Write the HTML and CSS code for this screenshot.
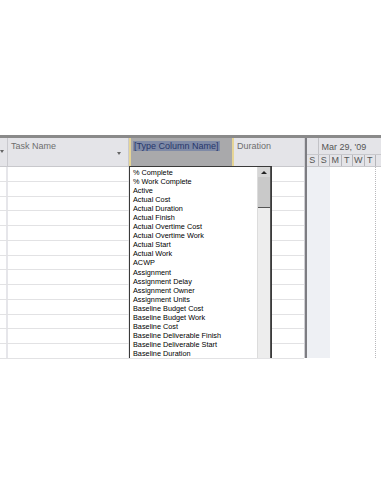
FILE: index.html
```html
<!DOCTYPE html>
<html lang="en">
<head>
    <meta charset="UTF-8">
    <title>Gantt Chart - Insert Column</title>
    <link rel="stylesheet" href="styles.css">
</head>
<body>

<div class="view">
    <div class="table-pane">
        <div class="hdr">
            <div class="cell c0"><span class="arrow"></span></div>
            <div class="cell c1">Task Name<span class="arrow"></span></div>
            <div class="cell c2 editing"><span class="sel">[Type Column Name]</span></div>
            <div class="cell c3">Duration</div>
        </div>
        <div class="rows">
            <div class="row"><div class="cell c0"></div><div class="cell c1"></div><div class="cell c2"></div><div class="cell c3"></div></div>
            <div class="row"><div class="cell c0"></div><div class="cell c1"></div><div class="cell c2"></div><div class="cell c3"></div></div>
            <div class="row"><div class="cell c0"></div><div class="cell c1"></div><div class="cell c2"></div><div class="cell c3"></div></div>
            <div class="row"><div class="cell c0"></div><div class="cell c1"></div><div class="cell c2"></div><div class="cell c3"></div></div>
            <div class="row"><div class="cell c0"></div><div class="cell c1"></div><div class="cell c2"></div><div class="cell c3"></div></div>
            <div class="row"><div class="cell c0"></div><div class="cell c1"></div><div class="cell c2"></div><div class="cell c3"></div></div>
            <div class="row"><div class="cell c0"></div><div class="cell c1"></div><div class="cell c2"></div><div class="cell c3"></div></div>
            <div class="row"><div class="cell c0"></div><div class="cell c1"></div><div class="cell c2"></div><div class="cell c3"></div></div>
            <div class="row"><div class="cell c0"></div><div class="cell c1"></div><div class="cell c2"></div><div class="cell c3"></div></div>
            <div class="row"><div class="cell c0"></div><div class="cell c1"></div><div class="cell c2"></div><div class="cell c3"></div></div>
            <div class="row"><div class="cell c0"></div><div class="cell c1"></div><div class="cell c2"></div><div class="cell c3"></div></div>
            <div class="row"><div class="cell c0"></div><div class="cell c1"></div><div class="cell c2"></div><div class="cell c3"></div></div>
            <div class="row"><div class="cell c0"></div><div class="cell c1"></div><div class="cell c2"></div><div class="cell c3"></div></div>
        </div>

        <!-- field picker dropped down from the new column header -->
        <div class="picker">
            <ul class="fields">
                <li>% Complete</li>
                <li>% Work Complete</li>
                <li>Active</li>
                <li>Actual Cost</li>
                <li>Actual Duration</li>
                <li>Actual Finish</li>
                <li>Actual Overtime Cost</li>
                <li>Actual Overtime Work</li>
                <li>Actual Start</li>
                <li>Actual Work</li>
                <li>ACWP</li>
                <li>Assignment</li>
                <li>Assignment Delay</li>
                <li>Assignment Owner</li>
                <li>Assignment Units</li>
                <li>Baseline Budget Cost</li>
                <li>Baseline Budget Work</li>
                <li>Baseline Cost</li>
                <li>Baseline Deliverable Finish</li>
                <li>Baseline Deliverable Start</li>
                <li>Baseline Duration</li>
            </ul>
            <div class="scrollbar">
                <div class="btn-up"><span class="tri"></span></div>
                <div class="thumb"></div>
            </div>
        </div>
    </div>

    <div class="splitter"></div>

    <div class="gantt-pane">
        <div class="timescale">
            <div class="weeks">
                <div class="wk wk-prev"></div>
                <div class="wk">Mar 29, '09</div>
            </div>
            <div class="days">
                <div class="day">S</div>
                <div class="day">S</div>
                <div class="day">M</div>
                <div class="day">T</div>
                <div class="day">W</div>
                <div class="day">T</div>
            </div>
        </div>
        <div class="chart">
            <div class="col shade"></div>
            <div class="col shade"></div>
            <div class="col"></div>
            <div class="col"></div>
            <div class="col"></div>
            <div class="col dotted"></div>
        </div>
    </div>
</div>

</body>
</html>
```

FILE: styles.css
```css
body {
    margin: 0;
    background-color: #fff;
    font-family: "Liberation Sans", Arial, sans-serif;
    width: 381px;
    height: 492px;
    overflow: hidden;
}
.view {
    margin-top: 135px;
    border-top: 3px solid #8a8a8a;
    display: flex;
    height: 220px;
}
.table-pane {
    position: relative;
    width: 304px;
    flex: none;
    border-right: 1px solid #cfcfd4;
}
.hdr, .row {
    display: flex;
}
.hdr {
    height: 28px;
    background-color: #e4e4e8;
    border-bottom: 1px solid #c8c8cc;
    font-size: 9px;
    color: #6e6e6e;
}
.hdr .cell {
    position: relative;
    padding: 3px 3px 0;
    border-right: 1px solid #c9c9ce;
}
.cell {
    box-sizing: border-box;
    height: 100%;
}
.c0 { width: 8px; padding: 0 !important; }
.c1 { width: 121px; }
.c2 { width: 105px; }
.c3 { width: 70px; border-right: none !important; }
.hdr .editing {
    background-color: #a9a9ab;
    border-left: 2px solid #e6d596;
    border-right: 2px solid #e6d596;
    padding-left: 2px;
}
.sel {
    background-color: #7f8aa6;
    color: #27366a;
    padding: 0 1px;
}
.arrow {
    position: absolute;
    right: 7px;
    top: 14px;
    width: 0;
    height: 0;
    border-left: 2.5px solid transparent;
    border-right: 2.5px solid transparent;
    border-top: 3px solid #666;
}
.c0 .arrow {
    right: 3px;
    top: 12px;
}
.row {
    height: 14.75px;
    border-bottom: 1px solid #e2e2e4;
    box-sizing: border-box;
}
.row .cell {
    border-right: 1px solid #ececee;
}
.row .c0 {
    border-right: 2px solid #e6e6ea;
}

/* dropdown field list */
.picker {
    position: absolute;
    left: 129px;
    top: 28px;
    width: 143px;
    height: 192px;
    box-sizing: border-box;
    border: 1px solid #3a3a3a;
    border-bottom: none;
    background-color: #fff;
    display: flex;
    overflow: hidden;
}
.fields {
    list-style: none;
    margin: 0;
    padding: 1px 0 0 3px;
    flex: 1;
    font-size: 7.3px;
    line-height: 9.05px;
    color: #000;
}
.scrollbar {
    width: 12px;
    background-color: #ededed;
    border-left: 1px solid #dcdcdc;
    border-right: 1px solid #555;
}
.btn-up {
    height: 10px;
    background-color: #d6d6d6;
    display: flex;
    align-items: center;
    justify-content: center;
}
.tri {
    width: 0;
    height: 0;
    border-left: 3px solid transparent;
    border-right: 3px solid transparent;
    border-bottom: 3px solid #222;
}
.thumb {
    height: 30px;
    background-color: #c9c9c9;
    border-bottom: 1px solid #555;
}

.splitter {
    width: 2px;
    flex: none;
    background-color: #7d7d82;
}

/* timescale */
.gantt-pane {
    flex: 1;
    display: flex;
    flex-direction: column;
    overflow: hidden;
}
.timescale {
    height: 28px;
    background-color: #e4e4e8;
    border-bottom: 1px solid #c8c8cc;
    font-size: 9px;
    color: #555;
}
.weeks, .days {
    display: flex;
    white-space: nowrap;
}
.weeks {
    height: 16px;
}
.wk {
    padding: 4px 0 0 3px;
}
.wk-prev {
    width: 11.5px;
    padding: 0;
    border-right: 1px solid #c2c2c6;
    box-sizing: border-box;
}
.days {
    height: 12px;
    border-top: 1px solid #c8c8cc;
    box-sizing: border-box;
}
.day {
    width: 11.5px;
    flex: none;
    box-sizing: border-box;
    border-right: 1px solid #b5b5ba;
    text-align: center;
    line-height: 11px;
}
.chart {
    flex: 1;
    display: flex;
}
.col {
    width: 11.5px;
    flex: none;
    box-sizing: border-box;
}
.shade {
    background-color: #eef0f4;
}
.dotted {
    border-right: 1px dotted #b8b8bc;
}
```
